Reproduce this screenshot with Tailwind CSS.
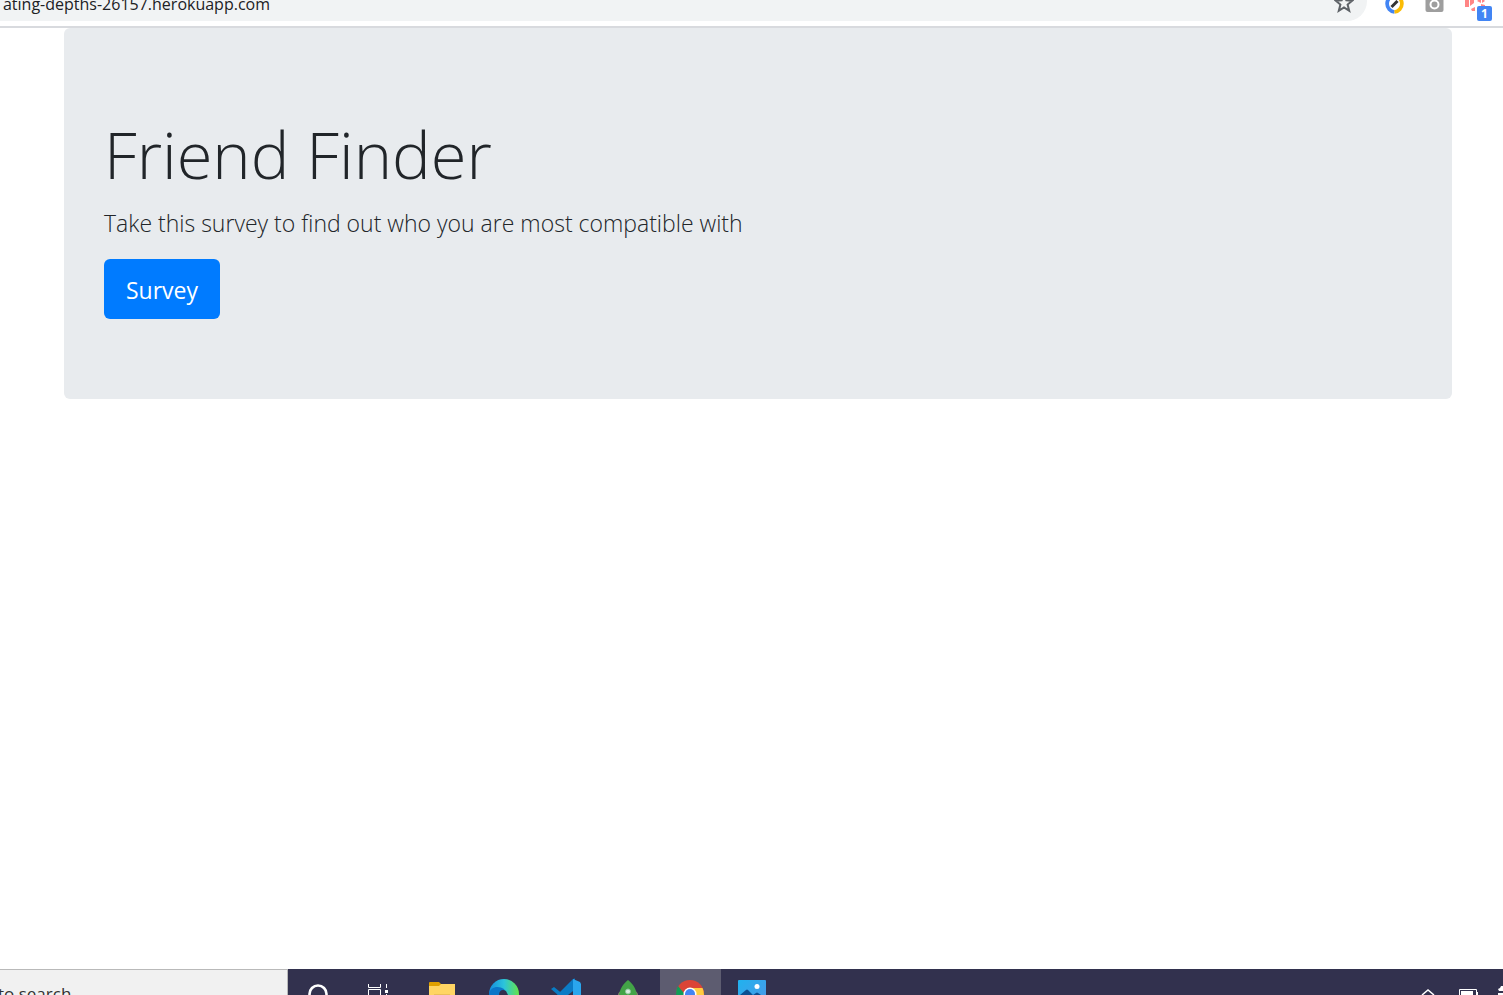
<!DOCTYPE html>
<html lang="en">
<head>
<meta charset="utf-8">
<title>Friend Finder</title>
<script src="https://cdn.jsdelivr.net/npm/@tailwindcss/browser@4"></script>
</head>
<body class="flex h-screen flex-col overflow-hidden bg-white font-['Open_Sans','Noto_Sans',sans-serif] text-[#212529]">
<header class="flex h-7 shrink-0 items-start justify-between overflow-hidden border-b-2 border-[#d8dade]">
  <div class="flex h-[21px] flex-1 items-start justify-between overflow-hidden rounded-br-[20px] bg-[#f1f3f4] pr-[13px]">
    <div class="flex h-2 w-[270px] items-center justify-end whitespace-nowrap text-[16px] text-[#202124]">ating-depths-26157.herokuapp.com</div>
    <button aria-label="Bookmark this page">
      <svg width="20" height="21" viewBox="0 0 20 21" fill="none" stroke="#5f6368" stroke-width="2"><path d="M10-5.500l2.300 5.800 6 .4-4.700 3.900 1.600 6.200-5.200-3.400-5.200 3.400 1.600-6.200L1.700.7l6-.4z"/></svg>
    </button>
  </div>
  <div class="flex w-[136px] items-start gap-5 pl-[17px]">
    <button aria-label="Compass extension"><svg width="20" height="21" viewBox="0 0 20 21" fill="none"><circle cx="10.500" cy="4" r="8" fill="#fff"/><path d="M10.500 12A8.300 8.300 0 0 1 10.500-4.500" stroke="#4285f4" stroke-width="3.700"/><path d="M10.500-4.500a8.300 8.300 0 0 1 0 16.500" stroke="#fbbc05" stroke-width="3.700"/><path d="M7.500 7l6-6" stroke="#333" stroke-width="3"/></svg></button>
    <button aria-label="Screenshot extension"><svg width="20" height="21" viewBox="0 0 20 21"><rect x="1.500" y="-6" width="18" height="18" rx="2" fill="#9e9e9e"/><circle cx="10.500" cy="4.500" r="4" fill="none" stroke="#fff" stroke-width="2"/></svg></button>
    <button aria-label="Extension, 1 notification" class="relative"><svg width="28" height="21" viewBox="0 0 28 21"><path d="M1-2h4v9H1zM6-2h4v5L6 6zM7 9l4-2v4H8zM13 1l4-3v5zM18-2l3 3-3 2zM17 4l4 1v2h-4z" fill="#ff8585"/></svg><span class="absolute top-[6px] left-[13px] flex h-[15px] w-[15px] items-center justify-center rounded-[2px] bg-[#4285f4] text-[12px] font-bold text-white">1</span></button>
  </div>
</header>
<main class="min-h-0 flex-1 pr-[51px] pl-16">
  <section class="rounded-md bg-[#e8ebee] px-10 py-20">
    <h1 class="pt-1 text-[65px] leading-[84px] font-light">Friend Finder</h1>
    <p class="mt-2 mb-4 text-[23px] leading-[39px] font-light">Take this survey to find out who you are most compatible with</p>
    <a href="#survey" class="inline-flex h-[60px] items-center rounded-md bg-[#007bff] px-[22px] pt-0.5 text-[23px] text-white">Survey</a>
  </section>
</main>
<footer class="flex h-[26px] shrink-0 items-start overflow-hidden bg-[#32314e]">
  <input aria-label="Search" value="to search" class="h-12 w-[288px] border-t border-r border-[#b9b9b9] bg-[#f1f1f1] pr-[210px] -indent-0.5 text-[17px] text-[#333]">
  <button aria-label="Cortana"><svg width="62" height="26" viewBox="0 0 62 26"><circle cx="30" cy="25" r="8.500" fill="none" stroke="#fff" stroke-width="2.600"/></svg></button>
  <button aria-label="Task View"><svg width="62" height="26" viewBox="0 0 62 26"><path d="M18.500 15v3.500h12V15M18.500 26v-5.500h12V26M36.500 15v4M36.500 25v1" fill="none" stroke="#fff"/><path d="M35 21h3v3h-3z" fill="#fff"/></svg></button>
  <button aria-label="File Explorer"><svg width="62" height="26" viewBox="0 0 62 26"><path d="M17 14q0-1 1-1h9l2 2v4H17z" fill="#dfa000"/><path d="M17 17h10l2-2h14v11H17z" fill="#ffd563"/><path d="M22 25.500h16v.5H22z" fill="#d9a84e"/></svg></button>
  <button aria-label="Microsoft Edge"><svg width="62" height="26" viewBox="0 0 62 26"><defs><linearGradient id="edge"><stop stop-color="#148bdc"/><stop offset=".5" stop-color="#2bc4dc"/><stop offset="1" stop-color="#65e448"/></linearGradient></defs><circle cx="30" cy="25" r="15" fill="url(#edge)"/><path d="M15 25c1-7 9-9 15-5l3 6H15z" fill="#0b76c8"/><path d="M25 26c0-5 4-6 7-4l2 4z" fill="#32314e"/></svg></button>
  <button aria-label="Visual Studio Code"><svg width="62" height="26" viewBox="0 0 62 26"><path d="M15 20l3-2 10 8h-6z" fill="#087cc4"/><path d="M21 26L37 10l2-.5v11L32 26z" fill="#0b7bc5"/><path d="M37 10l7 3 1 2v11h-8z" fill="#2aa6ed"/></svg></button>
  <button aria-label="MongoDB Compass"><svg width="62" height="26" viewBox="0 0 62 26"><path d="M20 26c0-2 1-3 3-4v4zM40 26c0-2-1-3-3-4v4z" fill="#8b7b70"/><path d="M21 26c1-7 5-12 9-15 4 3 8 8 9 15z" fill="#43a447"/><circle cx="30" cy="22.500" r="2.500" fill="#d8eee0" stroke="#8cc69b"/></svg></button>
  <button aria-label="Google Chrome" class="bg-[#5d5c70]"><svg width="61" height="26" viewBox="0 0 61 26"><circle cx="30" cy="25" r="14" fill="#db4437"/><path d="M18 17a14 14 0 0 0-2 9h9l-2-3z" fill="#0f9d58"/><path d="M30 19h12.500a14 14 0 0 1 1.500 7H30z" fill="#ffcd40"/><circle cx="30" cy="25" r="6.500" fill="#fff"/><circle cx="30" cy="25" r="5" fill="#4285f4"/></svg></button>
  <button aria-label="Photos"><svg width="62" height="26" viewBox="0 0 62 26"><defs><linearGradient id="photo" x2="1" y2="1"><stop stop-color="#20b2ef"/><stop offset="1" stop-color="#5095e5"/></linearGradient></defs><rect x="17" y="11" width="28" height="28" rx="1" fill="url(#photo)"/><path d="M19 26l6-5q1-1 2 0l5 5z" fill="#0b4f91"/><path d="M32 26l3-2q1-1 2 0l3 2z" fill="#0b4f91"/><circle cx="36" cy="17.500" r="2.500" fill="#fff"/></svg></button>
  <div class="ml-auto flex">
    <button aria-label="Show hidden icons"><svg width="40" height="26" viewBox="0 0 40 26"><path d="M19 26l6-5 6 5" fill="none" stroke="#fff" stroke-width="1.500"/></svg></button>
    <button aria-label="Battery"><svg width="40" height="26" viewBox="0 0 40 26"><path d="M16.500 26v-5.500h17V26" fill="none" stroke="#fff"/><path d="M18 22h12v4H18zM34 23h1v3h-1z" fill="#fff"/></svg></button>
    <button aria-label="Network"><svg width="20" height="26" viewBox="0 0 20 26"><path d="M15 20l2-1 1-2h2v5h-4zM15 24h5v2h-5z" fill="#fff"/></svg></button>
  </div>
</footer>
</body>
</html>
